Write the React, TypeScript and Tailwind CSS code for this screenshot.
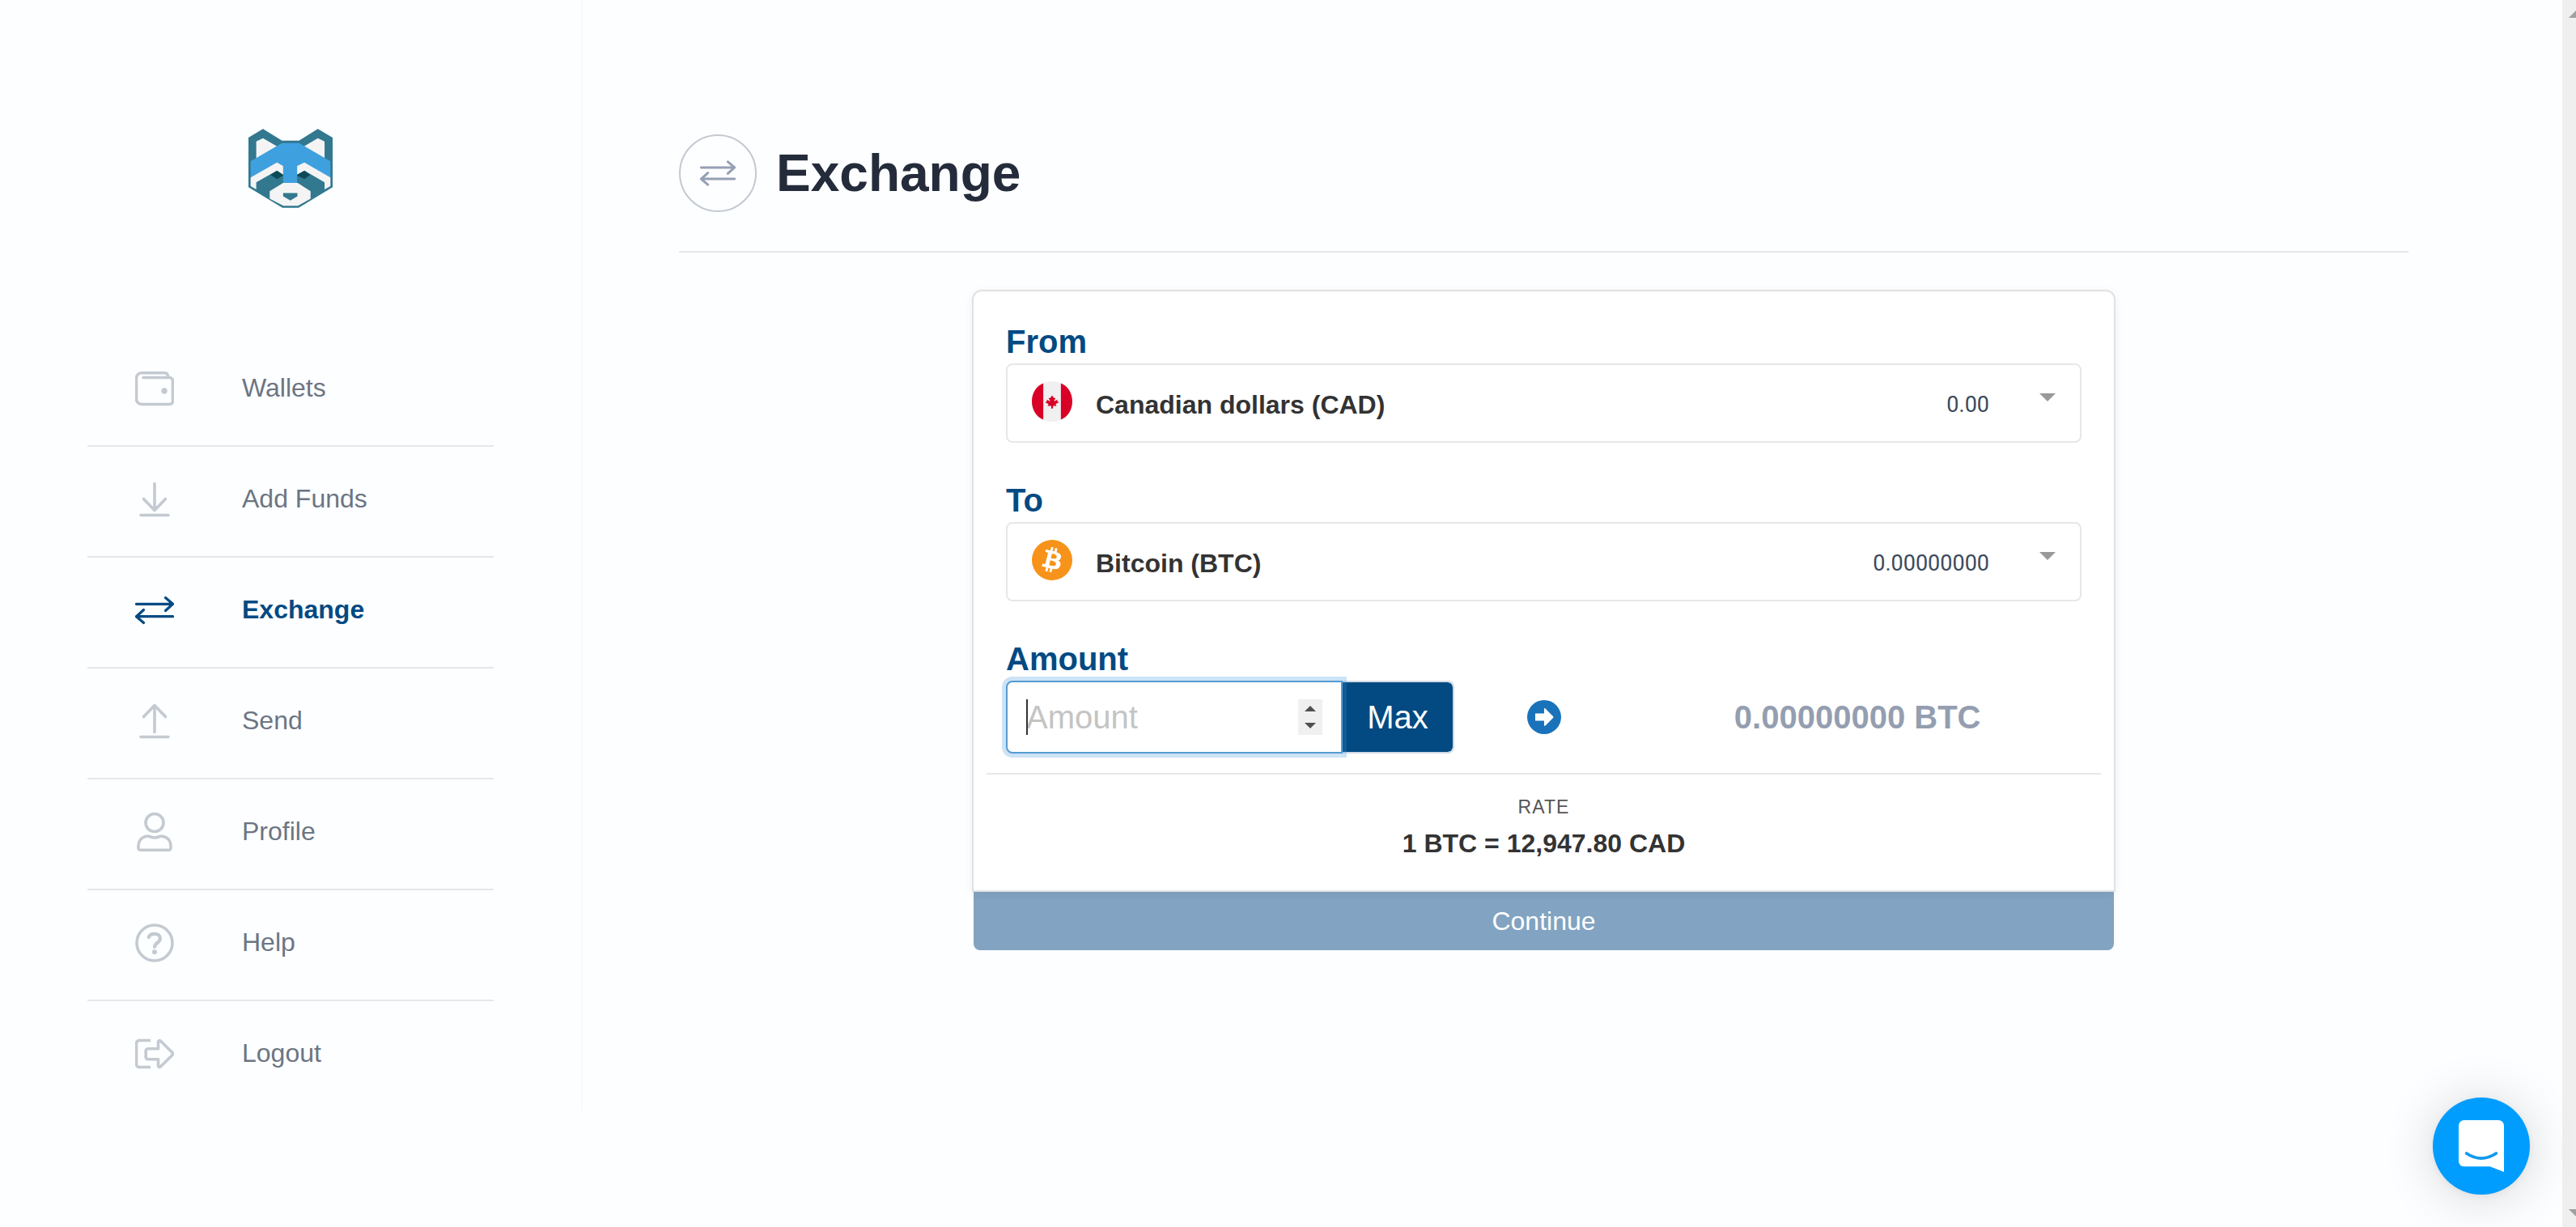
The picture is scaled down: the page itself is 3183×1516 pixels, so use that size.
import { useState, type ReactNode } from 'react';
import { SiBitcoin } from 'react-icons/si';

interface IconProps {
  className?: string;
}

interface NavItem {
  label: string;
  icon: ReactNode;
  active?: boolean;
}

interface CurrencyFieldProps {
  id: string;
  label: string;
  name: string;
  balance: string;
  icon: ReactNode;
}

function LineIcon({ className = 'size-12', children }: { className?: string; children: ReactNode }) {
  return (
    <svg
      viewBox="0 0 48 48"
      fill="none"
      stroke="currentColor"
      strokeWidth="3.6"
      strokeLinecap="round"
      strokeLinejoin="round"
      className={className}
      aria-hidden="true"
    >
      {children}
    </svg>
  );
}

function ExchangeIcon({ className }: IconProps) {
  return (
    <LineIcon className={className}>
      <path
        strokeWidth="3.2"
        d="M1.5 16.3H46.5M37.5 8.5L46.5 16.3L37.5 24.5M46.5 31.7H1.5M10.5 23.5L1.5 31.7L10.5 39.5"
      />
    </LineIcon>
  );
}

const navItems: NavItem[] = [
  {
    label: 'Wallets',
    icon: (
      <LineIcon>
        <path d="M10 10.5H42.5A4 4 0 0 1 46.5 14.5V39A4 4 0 0 1 42.5 43.5H8A6.5 6.5 0 0 1 1.5 37V11A6.5 6.5 0 0 1 8 4.7H36.5A3.5 3.5 0 0 1 40.3 8.5V10" />
        <circle cx="36" cy="27" r="3.7" fill="currentColor" stroke="none" />
      </LineIcon>
    ),
  },
  {
    label: 'Add Funds',
    icon: (
      <LineIcon>
        <path d="M24 4.5V37.5M10.5 23.5L24 37.5L37.5 23.5M7 43.5H41" />
      </LineIcon>
    ),
  },
  { label: 'Exchange', icon: <ExchangeIcon className="size-12" />, active: true },
  {
    label: 'Send',
    icon: (
      <LineIcon>
        <path d="M24 37.5V4.5M10.5 18.5L24 4.5L37.5 18.5M7 43.5H41" />
      </LineIcon>
    ),
  },
  {
    label: 'Profile',
    icon: (
      <LineIcon>
        <ellipse cx="24" cy="12.5" rx="11" ry="11" />
        <path d="M14 29.2C17 28.2 19 31 24 31C29 31 31 28.2 34 29.2C41 30.5 44 35.5 44 41V44A2.2 2.2 0 0 1 41.8 46.2H6.2A2.2 2.2 0 0 1 4 44V41C4 35.5 7 30.5 14 29.2Z" />
      </LineIcon>
    ),
  },
  {
    label: 'Help',
    icon: (
      <LineIcon>
        <circle cx="24" cy="24" r="22" />
        <path strokeWidth="4.2" d="M16.8 17C17.5 14 20 12.8 24 12.8C28.5 12.8 31 15 31 18.3C31 24 24 24 24 29" />
        <circle cx="24" cy="35.2" r="3" fill="currentColor" stroke="none" />
      </LineIcon>
    ),
  },
  {
    label: 'Logout',
    icon: (
      <LineIcon>
        <path strokeLinecap="butt" d="M19 7.5H5A3.5 3.5 0 0 0 1.5 11V37A3.5 3.5 0 0 0 5 40.5H19" />
        <path d="M28.5 17.8H16A2.8 2.8 0 0 0 13.2 20.6V28A2.8 2.8 0 0 0 16 30.8H28.5V38.5C28.5 40.5 30.5 41.2 31.8 39.5L45.5 26C46.9 24.6 46.9 23.4 45.5 22L31.8 8.5C30.5 6.8 28.5 7.5 28.5 9.5Z" />
      </LineIcon>
    ),
  },
];

function Logo() {
  return (
    <svg viewBox="78 57 313 294" className="h-[98px] w-[104px]" role="img" aria-label="Home">
      <path fill="#32788f" d="M78 90L132 57L203 101H266L336 57L391 90V274L264 351H205L78 274Z" />
      <path fill="#f4f4f5" d="M107 104L132 92L184 122L107 168ZM361 104L336 92L285 122L361 168Z" />
      <path fill="#3fa0df" d="M86 178L203 110H266L383 178V238L286 184L259 194V259H207V194L184 184L86 238Z" />
      <path
        fill="#f4f4f5"
        d="M86 238L184 182L207 195V227L184 212L107 256V282L86 270ZM383 238L286 182L259 195V227L286 212L361 256V282L383 270Z"
      />
      <path fill="#0d4a58" d="M160 228L184 213L207 228V231L184 244ZM308 228L286 213L259 228V231L286 244Z" />
      <path fill="#f4f4f5" d="M207 258H261L309 289V317L262 343H208L157 317V289Z" />
      <path fill="#32788f" d="M207 296H260V308L234 324L207 308Z" />
    </svg>
  );
}

function CanadaFlag() {
  return (
    <svg viewBox="0 0 512 512" className="size-[50px] shrink-0" aria-hidden="true">
      <circle cx="256" cy="256" r="256" fill="#f0f0f0" />
      <path
        fill="#d80027"
        d="M0 256C0 366 62 455 144.7 486V26C62 57 0 146 0 256ZM512 256C512 146 450 57 367.3 26V486C450 455 512 366 512 256ZM300.5 289.4L345 267.1L322.8 256V233.7L278.3 256L300.5 211.5H278.3L256 178.1L233.7 211.5H211.5L233.7 256L189.2 233.7V256L167 267.1L211.5 289.4L200.3 311.7H244.9V345H267.1V311.7H311.7Z"
      />
    </svg>
  );
}

function CurrencyField({ id, label, name, balance, icon }: CurrencyFieldProps) {
  return (
    <div className="mb-[46px]">
      <label htmlFor={id} className="mb-[2px] block text-[40px] leading-[50px] font-bold text-[#034a82]">
        {label}
      </label>
      <div className="flex items-start rounded-lg border-2 border-[#e6e7e8] px-[30px] pt-5 pb-4">
        {icon}
        <select
          id={id}
          className="ml-[29px] h-[58px] min-w-0 flex-1 appearance-none bg-transparent text-[32px] leading-[58px] font-bold text-[#333] outline-none"
        >
          <option>{name}</option>
        </select>
        <span className="font-[Roboto,sans-serif] text-[27px] leading-[58px] text-[#3c4a5c]">{balance}</span>
        <svg viewBox="0 0 20 10" className="mt-[15px] ml-[62px] h-[10px] w-5" aria-hidden="true">
          <path d="M0 0H20L10 10Z" fill="#999" />
        </svg>
      </div>
    </div>
  );
}

function Sidebar() {
  return (
    <aside className="flex w-[720px] shrink-0 flex-col border-r-2 border-[#f7f9fb] px-[108px] pt-[159px]">
      <a href="#" className="mx-auto">
        <Logo />
      </a>
      <nav className="mt-[158px] divide-y-2 divide-[#e5e7ea]">
        {navItems.map((item) => (
          <a
            key={item.label}
            href="#"
            className={
              item.active
                ? 'flex items-center gap-[84px] pt-10 pb-[46px] pl-[59px] font-bold text-[#034a82]'
                : 'flex items-center gap-[84px] pt-10 pb-[46px] pl-[59px] text-[#c3cad1]'
            }
          >
            {item.icon}
            <span className={item.active ? 'text-[32px] leading-[49px]' : 'text-[32px] leading-[49px] text-[#6c7583]'}>
              {item.label}
            </span>
          </a>
        ))}
      </nav>
    </aside>
  );
}

function AmountInput() {
  const [amount, setAmount] = useState('');

  const step = (delta: number) => setAmount(String(Math.max(0, Number(amount) + delta)));

  return (
    <div className="flex h-[90px]">
      <div className="relative z-10 flex min-w-0 flex-1 items-center rounded-l-lg border-2 border-[#559bd3] bg-white px-[23px] shadow-[0_0_0_5px_rgba(52,144,220,0.25)]">
        {amount === '' && <span className="absolute h-11 w-[2px] bg-[#333]" />}
        <input
          id="amount"
          type="number"
          placeholder="Amount"
          value={amount}
          onChange={(e) => setAmount(e.target.value)}
          className="w-full min-w-0 flex-1 [appearance:textfield] bg-transparent text-[40px] leading-[48px] text-[#333] outline-none placeholder:text-[#c4c4c4]"
        />
        <div className="flex h-11 w-[30px] flex-col bg-[#f0f0f0]">
          <button
            type="button"
            aria-label="Increase"
            onClick={() => step(1)}
            className="flex flex-1 items-end justify-center pb-[7px]"
          >
            <svg viewBox="0 0 14 7" className="h-[7px] w-[14px]">
              <path d="M0 7L7 0L14 7Z" fill="#505050" />
            </svg>
          </button>
          <button
            type="button"
            aria-label="Decrease"
            onClick={() => step(-1)}
            className="flex flex-1 items-start justify-center pt-[7px]"
          >
            <svg viewBox="0 0 14 7" className="h-[7px] w-[14px]">
              <path d="M0 0L7 7L14 0Z" fill="#505050" />
            </svg>
          </button>
        </div>
      </div>
      <button
        type="button"
        className="rounded-r-lg border-2 border-l-0 border-[#d0d9e4] bg-[#034a82] bg-clip-padding px-[30px] text-[40px] text-white"
      >
        Max
      </button>
    </div>
  );
}

function ExchangeForm() {
  return (
    <form className="mx-auto mt-[46px] w-full max-w-[1413px]" onSubmit={(e) => e.preventDefault()}>
      <div className="relative rounded-t-xl border-2 border-[#dfe1e3] bg-white pt-[37px] shadow-[0_2px_12px_rgba(0,0,0,0.06)]">
        <div className="px-10">
          <CurrencyField id="from" label="From" name="Canadian dollars (CAD)" balance="0.00" icon={<CanadaFlag />} />
          <CurrencyField
            id="to"
            label="To"
            name="Bitcoin (BTC)"
            balance="0.00000000"
            icon={<SiBitcoin className="size-[50px] shrink-0 text-[#f7931a]" />}
          />
          <label htmlFor="amount" className="mb-[2px] block text-[40px] leading-[50px] font-bold text-[#034a82]">
            Amount
          </label>
          <div className="grid grid-cols-12 items-center">
            <div className="col-span-5">
              <AmountInput />
            </div>
            <div className="col-span-2 flex justify-center">
              <svg viewBox="0 0 42 42" className="size-[42px]" aria-hidden="true">
                <circle cx="21" cy="21" r="21" fill="#1a73ba" />
                <path
                  d="M10 16.5H21V11C21 10 21.8 9.8 22.5 10.5L32 20C32.6 20.6 32.6 21.4 32 22L22.5 31.5C21.8 32.2 21 32 21 31V25.5H10Z"
                  fill="#fff"
                />
              </svg>
            </div>
            <p className="col-span-5 text-center text-[40px] leading-[52px] font-bold text-[#949eb0]">0.00000000 BTC</p>
          </div>
        </div>
        <hr className="mx-4 mt-6 border-t-2 border-[#e6e8e9]" />
        <div className="pt-5 pb-[33px] text-center">
          <p className="text-[23px] leading-10 tracking-wider text-[#555]">RATE</p>
          <p className="text-[32px] leading-[50px] font-bold text-[#333]">1 BTC = 12,947.80 CAD</p>
        </div>
      </div>
      <div className="px-[2px]">
        <button type="submit" className="h-[72px] w-full rounded-b-lg bg-[#82a3c1] text-[32px] text-white">
          Continue
        </button>
      </div>
    </form>
  );
}

export default function App() {
  return (
    <div className="flex min-h-screen bg-[#fdfeff] font-['Liberation_Sans',Arial,sans-serif]">
      <div className="flex min-w-0 flex-1 items-start">
        <Sidebar />
        <main className="min-w-0 flex-1 pt-[166px] pr-[190px] pl-[119px]">
          <header className="flex items-center gap-6 border-b-2 border-[#e5e8ea] pb-12">
            <span className="flex size-24 items-center justify-center rounded-full border-2 border-[#c2c9d2] text-[#96a0b3]">
              <ExchangeIcon className="size-11" />
            </span>
            <h1 className="text-[64px] leading-[96px] font-bold text-[#242c3b]">Exchange</h1>
          </header>
          <ExchangeForm />
        </main>
      </div>

      <div className="flex w-[17px] shrink-0 flex-col items-end justify-between bg-[#efefef] py-[13px]" aria-hidden="true">
        <svg viewBox="0 0 9 9" className="size-[9px]">
          <path d="M9 0V9H0Z" fill="#a0a0a0" />
        </svg>
        <svg viewBox="0 0 9 9" className="size-[9px]">
          <path d="M0 0H9V9Z" fill="#a0a0a0" />
        </svg>
      </div>

      <button
        type="button"
        aria-label="Open chat"
        className="fixed right-[57px] bottom-10 size-[120px] rounded-full bg-[#009dff] shadow-[0_2px_12px_rgba(0,0,0,0.06),0_4px_64px_rgba(0,0,0,0.16)]"
      >
        <svg viewBox="138 108 360 360" className="size-full" aria-hidden="true">
          <path
            d="M254 192H382A20 20 0 0 1 402 212V384L350 364H254A20 20 0 0 1 234 344V212A20 20 0 0 1 254 192Z"
            fill="#fff"
          />
          <path d="M263 315Q318 352 373 315" fill="none" stroke="#0f99ee" strokeWidth="11" strokeLinecap="round" />
        </svg>
      </button>
    </div>
  );
}
